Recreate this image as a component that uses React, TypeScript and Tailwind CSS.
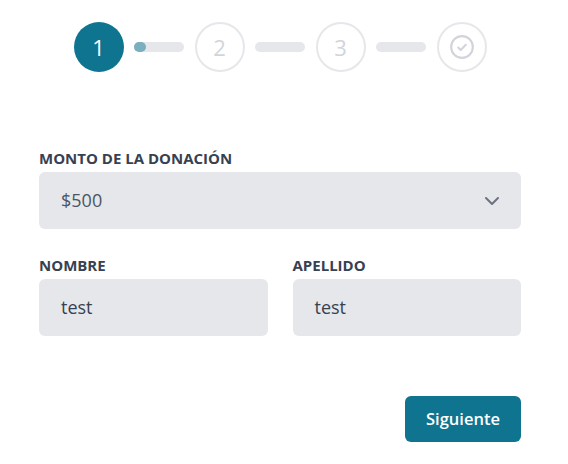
const font = { fontFamily: '"Open Sans", "Noto Sans", sans-serif' };

function Bar({ progress }: { progress?: boolean }) {
  return (
    <div className="relative h-[10px] w-[50px] rounded-full bg-[#e5e7eb]">
      {progress && <div className="absolute left-0 top-0 h-[10px] w-[12px] rounded-full bg-[#7aafc0]" />}
    </div>
  );
}

function Step({ n }: { n: string }) {
  return (
    <div className="flex h-[50px] w-[50px] items-center justify-center rounded-full border-2 border-[#e5e7eb] text-[22px] text-[#d1d5db]">
      {n}
    </div>
  );
}

export default function App() {
  return (
    <div className="min-h-[464px] w-[568px] bg-white text-[#374151]" style={font}>
      <div className="ml-[39px] w-[482px] pt-[22px]">
        {/* Stepper */}
        <div className="flex items-center justify-center gap-[10.5px]">
          <div className="flex h-[50px] w-[50px] items-center justify-center rounded-full bg-[#0e7490] text-[22px] text-white">
            1
          </div>
          <Bar progress />
          <Step n="2" />
          <Bar />
          <Step n="3" />
          <Bar />
          <div className="flex h-[50px] w-[50px] items-center justify-center rounded-full border-2 border-[#e5e7eb]">
            <svg width="26" height="26" viewBox="0 0 24 24" fill="none" stroke="#d1d5db" strokeWidth="2" strokeLinecap="round" strokeLinejoin="round">
              <circle cx="12" cy="12" r="10" />
              <path d="M8.5 12.5l2.3 2.2 4.7-4.7" />
            </svg>
          </div>
        </div>

        {/* Form */}
        <div className="mt-[76px]">
          <label className="block text-[15px] font-bold uppercase leading-[20px] text-[#374151]">
            Monto de la donación
          </label>
          <div className="mt-[4px] flex h-[57px] items-center justify-between rounded-md bg-[#e5e7eb] pl-[22px] pr-[21px]">
            <span className="text-[18px] text-[#4b5563]">$500</span>
            <svg width="16" height="10" viewBox="0 0 16 10" fill="none" stroke="#6b7280" strokeWidth="2" strokeLinecap="round" strokeLinejoin="round">
              <path d="M2 2l6 6 6-6" />
            </svg>
          </div>
        </div>

        <div className="mt-[26px] grid grid-cols-2 gap-[25px]">
          <div>
            <label className="block text-[15px] font-bold uppercase leading-[20px] text-[#374151]">Nombre</label>
            <div className="mt-[4px] flex h-[57px] items-center rounded-md bg-[#e5e7eb] px-[22px] text-[18px] text-[#374151]">
              test
            </div>
          </div>
          <div>
            <label className="block text-[15px] font-bold uppercase leading-[20px] text-[#374151]">Apellido</label>
            <div className="mt-[4px] flex h-[57px] items-center rounded-md bg-[#e5e7eb] px-[22px] text-[18px] text-[#374151]">
              test
            </div>
          </div>
        </div>

        <div className="mt-[60px] flex justify-end">
          <button className="h-[46px] w-[116px] rounded-md bg-[#0e7490] text-[16.5px] font-semibold text-white">
            Siguiente
          </button>
        </div>
      </div>
    </div>
  );
}
